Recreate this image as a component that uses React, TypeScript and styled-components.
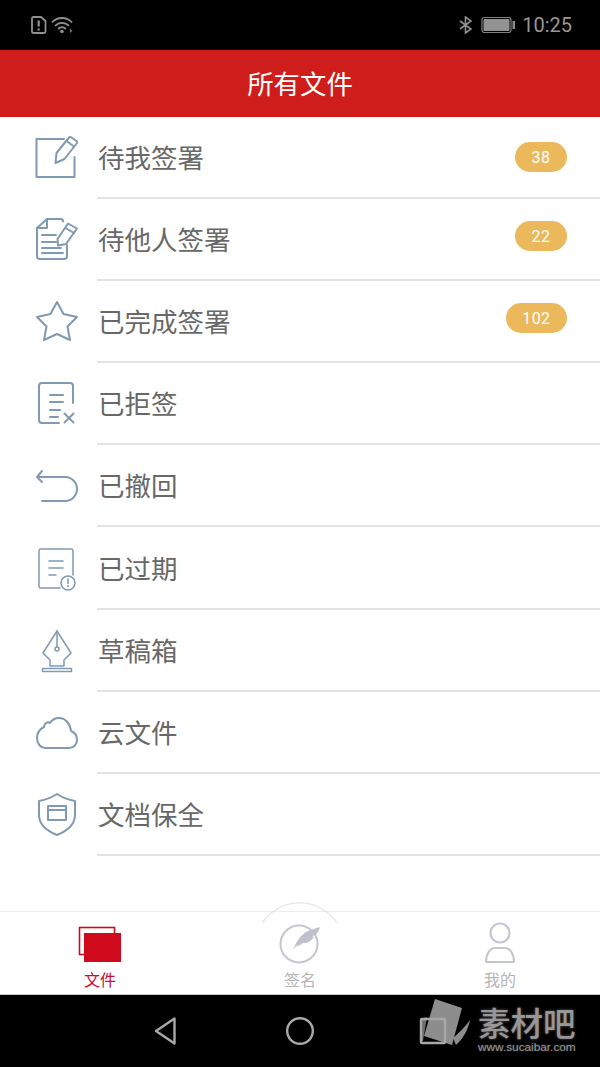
import React from "react";
import styled, { createGlobalStyle } from "styled-components";

const Global = createGlobalStyle`
  html, body { margin: 0; padding: 0; background: #fff; }
  body { font-family: "Noto Sans CJK SC", "Liberation Sans", sans-serif; }
  * { box-sizing: border-box; }
`;

const Page = styled.div`
  position: relative;
  width: 600px;
  height: 1067px;
  display: flex;
  flex-direction: column;
  overflow: hidden;
  background: #fff;
`;

const StatusBar = styled.div`
  height: 50px;
  flex: none;
  background: #000;
  display: flex;
  align-items: center;
  justify-content: space-between;
  padding: 0 28px 0 31px;
`;

const StatusGroup = styled.div`
  display: flex;
  align-items: center;
  gap: 4px;
`;

const StatusRight = styled.div`
  display: flex;
  align-items: center;
  gap: 9px;
`;

const Clock = styled.span`
  font-family: Roboto, "Liberation Sans", sans-serif;
  font-size: 20px;
  color: #969696;
  line-height: 24px;
  margin-left: -2px;
`;

const TitleBar = styled.header`
  height: 67px;
  flex: none;
  background: #cf1d1b;
  color: #fff;
  font-size: 26.4px;
  padding-bottom: 2px;
  display: flex;
  align-items: center;
  justify-content: center;
`;

const List = styled.main`
  height: 794px;
  flex: none;
  display: flex;
  flex-direction: column;
`;

const Row = styled.div`
  height: 82.1px;
  flex: none;
  display: flex;
`;

const IconCell = styled.div`
  width: 97px;
  flex: none;
  padding-left: 32px;
  display: flex;
  align-items: center;
`;

const RowBody = styled.div`
  flex: 1;
  display: flex;
  align-items: center;
  justify-content: space-between;
  padding: 0 33px 0 1px;
  border-bottom: 2px solid #e2e2e2;
`;

const RowLabel = styled.span`
  font-size: 26.5px;
  line-height: 36px;
  color: #686868;
`;

const Badge = styled.span<{ $raised?: boolean }>`
  height: 30px;
  padding: 0 16.5px;
  min-width: 52px;
  border-radius: 15px;
  background: #ebb95c;
  color: #fff;
  font-family: Roboto, "Liberation Sans", sans-serif;
  font-size: 16px;
  letter-spacing: 0.4px;
  display: flex;
  align-items: center;
  justify-content: center;
  margin-top: ${(p) => (p.$raised ? "-6px" : "0")};
`;

const LineIcon = styled.svg`
  width: 48px;
  height: 48px;
  fill: none;
  stroke: #7f9ab2;
  stroke-width: 2;
  stroke-linecap: round;
  stroke-linejoin: round;
`;

const ThinLineIcon = styled(LineIcon)`
  stroke-width: 1.5;
`;

const TabBar = styled.nav`
  height: 84px;
  flex: none;
  display: grid;
  grid-template-columns: repeat(3, 200px);
  background: #fff;
  border-top: 1px solid #eeeeee;
  border-bottom: 1px solid #c9c9c9;
`;

const Tab = styled.div`
  display: flex;
  flex-direction: column;
  align-items: center;
`;

const TabIcon = styled.svg`
  width: 60px;
  height: 53px;
  flex: none;
  overflow: visible;
  fill: none;
`;

const TabLabel = styled.span<{ $active?: boolean }>`
  font-size: 16px;
  line-height: 22px;
  margin-top: 3px;
  color: ${(p) => (p.$active ? "#c8102e" : "#b4b4b4")};
`;

const NavBar = styled.div`
  flex: 1;
  background: #000;
  padding: 0 100px;
  display: grid;
  grid-template-columns: repeat(3, 1fr);
  align-items: center;
  justify-items: center;
`;

const NavGlyph = styled.svg`
  position: relative;
  z-index: 2;
  width: 30px;
  height: 30px;
  fill: none;
  stroke: #a8a8a8;
  stroke-width: 2.4;
  stroke-linejoin: round;
`;

const Watermark = styled.div`
  position: absolute;
  left: 415px;
  top: 995px;
  width: 185px;
  height: 72px;
  display: flex;
`;

const WatermarkLogo = styled.svg`
  width: 63px;
  height: 72px;
  flex: none;
`;

const WatermarkText = styled.div`
  display: flex;
  flex-direction: column;
  padding-top: 9px;
`;

const WatermarkName = styled.span`
  font-size: 32.5px;
  line-height: 36px;
  font-weight: 500;
  color: #979797;
  text-shadow: 0 0 3px rgba(255, 255, 255, 0.35);
  white-space: nowrap;
`;

const WatermarkUrl = styled.span`
  font-family: "Liberation Sans", sans-serif;
  font-size: 11.8px;
  line-height: 14px;
  color: #949494;
  text-shadow: 0 0 2px rgba(255, 255, 255, 0.3);
  white-space: nowrap;
`;

const icons: Record<string, React.ReactNode> = {
  sign: (
    <LineIcon viewBox="0 0 48 48">
      <path d="M32 5H4.5V43H42.5V23" />
      <path d="M23.5 29L24.5 19L37 3.5Q38 2.5 39.5 3.5L44.5 7Q45.5 8 45 9L32.5 25Z" />
      <path d="M34.5 7L42 12.5" />
    </LineIcon>
  ),
  others: (
    <LineIcon viewBox="0 0 48 48">
      <path d="M31 5.5Q31 3 29 3H15L5 12V40Q5 43 8 43H32Q35 43 35 40V29" />
      <path d="M15 3V12H5" />
      <path d="M10 19H24M10 26H24M10 32H29M10 37H31" />
      <path d="M26 29.5L25.5 23L36 7.5L45 12.5L34 28Z" />
      <path d="M33.5 12L42 17" />
    </LineIcon>
  ),
  star: (
    <LineIcon viewBox="0 0 48 48">
      <path d="M25 4L31.5 16L45 19L35.5 28.5L38 42L25 36L12 42L14.5 28.5L5 19L18.5 16Z" />
    </LineIcon>
  ),
  rejected: (
    <LineIcon viewBox="0 0 48 48">
      <path d="M27 43H10Q7 43 7 40V6Q7 3 10 3H38Q41 3 41 6V23" />
      <path d="M18 15H31M18 22H31M18 30H28M18 37H26" />
      <path d="M32.5 33.5L41.5 42.5M41.5 33.5L32.5 42.5" />
    </LineIcon>
  ),
  revoked: (
    <LineIcon viewBox="0 0 48 48">
      <path d="M10 9L5 15L10 20" />
      <path d="M5.5 15H33A12 12 0 0 1 33 39H10" />
    </LineIcon>
  ),
  expired: (
    <ThinLineIcon viewBox="0 0 48 48">
      <path d="M28 43H9Q7 43 7 41V6Q7 4 9 4H39Q41 4 41 6V30" />
      <path d="M17 16H31M17 23H31M17 30H24" />
      <circle cx="36" cy="38" r="7" />
      <path d="M36 34V38.5M36 40.5V41.5" />
    </ThinLineIcon>
  ),
  drafts: (
    <ThinLineIcon viewBox="0 0 48 48">
      <path d="M25 4L11 26L18 33V39H32V33L39 26Z" />
      <path d="M25 4V20" />
      <circle cx="25" cy="22" r="2" />
      <rect x="10.5" y="41.5" width="29" height="3" />
    </ThinLineIcon>
  ),
  cloud: (
    <LineIcon viewBox="0 0 48 48">
      <path d="M13 39H37C42 39 45 35 45 31C45 26 42 23 39 22C38 14 33 9 27 9C22 9 20 11 18 14C16 12.5 12 14 12 18C8 20 5 24 5 29C5 35 9 39 13 39Z" />
    </LineIcon>
  ),
  vault: (
    <LineIcon viewBox="0 0 48 48">
      <path d="M25 3C31 7 37 9 43 10V24C43 33 35 40 25 44C15 40 7 33 7 24V10C13 9 19 7 25 3Z" />
      <rect x="16" y="15" width="18" height="14" />
      <path d="M16 19H34" />
    </LineIcon>
  ),
};

const rows = [
  { key: "sign", label: "待我签署", badge: "38" },
  { key: "others", label: "待他人签署", badge: "22", raised: true },
  { key: "star", label: "已完成签署", badge: "102", raised: true },
  { key: "rejected", label: "已拒签" },
  { key: "revoked", label: "已撤回" },
  { key: "expired", label: "已过期" },
  { key: "drafts", label: "草稿箱" },
  { key: "cloud", label: "云文件" },
  { key: "vault", label: "文档保全" },
];

export default function App() {
  return (
    <Page>
      <Global />
      <StatusBar>
        <StatusGroup>
          <svg width="16" height="18" viewBox="0 0 16 18" fill="none">
            <path d="M2.5 1H10L14.5 5V15.5Q14.5 17 13 17H2.5Q1 17 1 15.5V2.5Q1 1 2.5 1Z" stroke="#8f8f8f" strokeWidth="1.8" />
            <path d="M7.7 4.5V10.5M7.7 12.5V14.5" stroke="#8f8f8f" strokeWidth="2.2" />
          </svg>
          <svg width="23" height="18" viewBox="0 0 23 18" fill="none" stroke="#8f8f8f" strokeWidth="1.8">
            <path d="M1 6.5C6.5 0.5 15.5 0.5 21 6.5" />
            <path d="M4 10C8 5.8 14 5.8 18 10" />
            <path d="M7 13C9.5 10.8 12.5 10.8 15 13" />
            <circle cx="11" cy="15.5" r="1.8" fill="#8f8f8f" stroke="none" />
            <path d="M19 12.5L21.5 15L19 17Z" fill="#6a6a6a" stroke="none" />
          </svg>
        </StatusGroup>
        <StatusRight>
          <svg width="14" height="18" viewBox="0 0 14 18" fill="none" stroke="#8f8f8f" strokeWidth="1.6">
            <path d="M2 5L13 13L7.5 17V1L13 5L2 13" />
          </svg>
          <svg width="34" height="18" viewBox="0 0 34 18">
            <rect x="1" y="1.5" width="29" height="15" rx="2.5" fill="none" stroke="#7f7f7f" strokeWidth="1.2" />
            <rect x="2.5" y="3" width="26" height="12" rx="1" fill="#929292" />
            <rect x="31.5" y="5" width="2.5" height="8" fill="#8a8a8a" />
          </svg>
          <Clock>10:25</Clock>
        </StatusRight>
      </StatusBar>

      <TitleBar>所有文件</TitleBar>

      <List>
        {rows.map((r) => (
          <Row key={r.key}>
            <IconCell>{icons[r.key]}</IconCell>
            <RowBody>
              <RowLabel>{r.label}</RowLabel>
              {r.badge && <Badge $raised={r.raised}>{r.badge}</Badge>}
            </RowBody>
          </Row>
        ))}
      </List>

      <TabBar>
        <Tab>
          <TabIcon viewBox="0 0 60 53">
            <rect x="9.5" y="15.5" width="35" height="27" stroke="#cf0a1d" strokeWidth="1.6" />
            <rect x="14" y="21" width="37" height="29" fill="#cf0a1d" />
          </TabIcon>
          <TabLabel $active>文件</TabLabel>
        </Tab>
        <Tab>
          <TabIcon viewBox="0 0 60 53">
            <path d="M-8 11A45 45 0 0 1 67 11" stroke="#e4e4e6" strokeWidth="1.2" />
            <circle cx="29" cy="32" r="18.5" stroke="#c5c6d0" strokeWidth="2" />
            <path d="M23 38C26 30 30 24 36 20C40 18 46 16 50 15C49 19 47 22 45 23L42 24L44 25C41 29 38 31 35 31L33 31C31 33 28 34 26 34Z" fill="#c0c1cc" />
          </TabIcon>
          <TabLabel>签名</TabLabel>
        </Tab>
        <Tab>
          <TabIcon viewBox="0 0 60 53">
            <circle cx="30" cy="21" r="9.5" stroke="#c5c6d0" strokeWidth="2.2" />
            <path d="M16 50C16 42 20 36 25 36H35C40 36 44 42 44 50Z" stroke="#c5c6d0" strokeWidth="2.2" strokeLinejoin="round" />
          </TabIcon>
          <TabLabel>我的</TabLabel>
        </Tab>
      </TabBar>

      <NavBar>
        <NavGlyph viewBox="0 0 30 30">
          <path d="M4 15L22.5 2.5V27.5Z" />
        </NavGlyph>
        <NavGlyph viewBox="0 0 30 30">
          <circle cx="15" cy="15" r="12.8" />
        </NavGlyph>
        <NavGlyph viewBox="0 0 30 30">
          <rect x="3" y="3" width="24" height="24" rx="1" />
        </NavGlyph>
      </NavBar>

      <Watermark>
        <WatermarkLogo viewBox="0 0 63 72">
          <path d="M5 24L12 22L8 46H6Q5 46 5 45Z" fill="#6e6e6e" />
          <path d="M20 4L47 13L37 50L9 41Z" fill="#8d8d8d" />
          <path d="M38 43C44 38 50 32 55 25C53 35 48 44 41 50Z" fill="#8d8d8d" />
        </WatermarkLogo>
        <WatermarkText>
          <WatermarkName>素材吧</WatermarkName>
          <WatermarkUrl>www.sucaibar.com</WatermarkUrl>
        </WatermarkText>
      </Watermark>
    </Page>
  );
}
